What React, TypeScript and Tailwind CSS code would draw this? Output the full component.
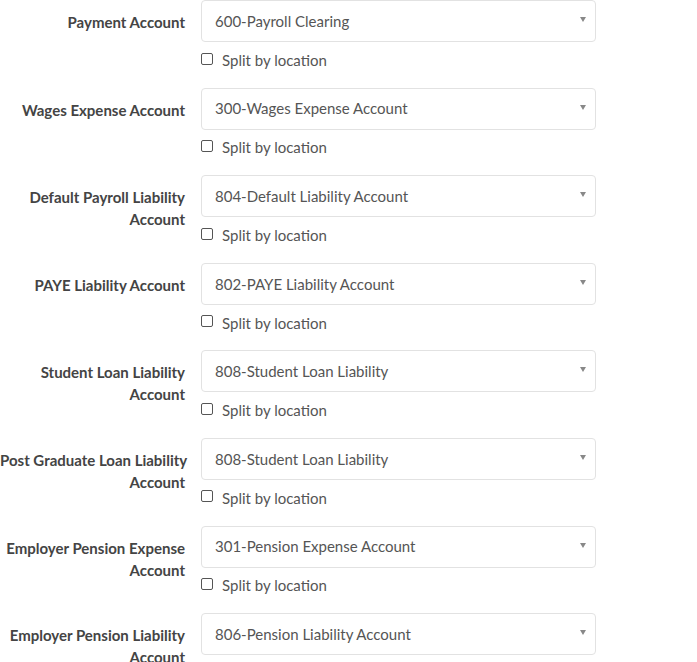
import React from 'react';

const ROWS = [
  { label: ['Payment Account'], value: '600-Payroll Clearing' },
  { label: ['Wages Expense Account'], value: '300-Wages Expense Account' },
  { label: ['Default Payroll Liability', 'Account'], value: '804-Default Liability Account' },
  { label: ['PAYE Liability Account'], value: '802-PAYE Liability Account' },
  { label: ['Student Loan Liability', 'Account'], value: '808-Student Loan Liability' },
  { label: ['Post Graduate Loan Liability', 'Account'], value: '808-Student Loan Liability' },
  { label: ['Employer Pension Expense', 'Account'], value: '301-Pension Expense Account' },
  { label: ['Employer Pension Liability', 'Account'], value: '806-Pension Liability Account' },
];

function AccountRow({ label, value }: { label: string[]; value: string }) {
  return (
    <div className="flex h-[87.6px]">
      <div className="w-[185px] shrink-0 pt-[11px] text-right text-[15px] font-bold leading-[22px] text-[#444]">
        {label.map((l) => (
          <div key={l} className="whitespace-nowrap">{l}</div>
        ))}
      </div>
      <div className="ml-[16px] w-[395px]">
        <div className="relative flex h-[42px] items-center rounded-[4px] border border-[#e2e2e2] bg-white pl-[13px] text-[15px] text-[#555]">
          {value}
          <span className="absolute right-[9px] top-[16px] h-0 w-0 border-x-[3px] border-t-[5px] border-x-transparent border-t-[#888]" />
        </div>
        <label className="mt-[8px] flex h-[20px] items-center text-[15px] text-[#555]">
          <span className="mb-[3px] h-[12px] w-[12px] rounded-[2px] border border-[#555] bg-white" />
          <span className="ml-[9px]">Split by location</span>
        </label>
      </div>
    </div>
  );
}

export default function App() {
  return (
    <div className="h-[662px] overflow-hidden bg-white" style={{ fontFamily: 'Lato, "Open Sans", sans-serif' }}>
      {ROWS.map((r, i) => (
        <AccountRow key={i} label={r.label} value={r.value} />
      ))}
    </div>
  );
}
